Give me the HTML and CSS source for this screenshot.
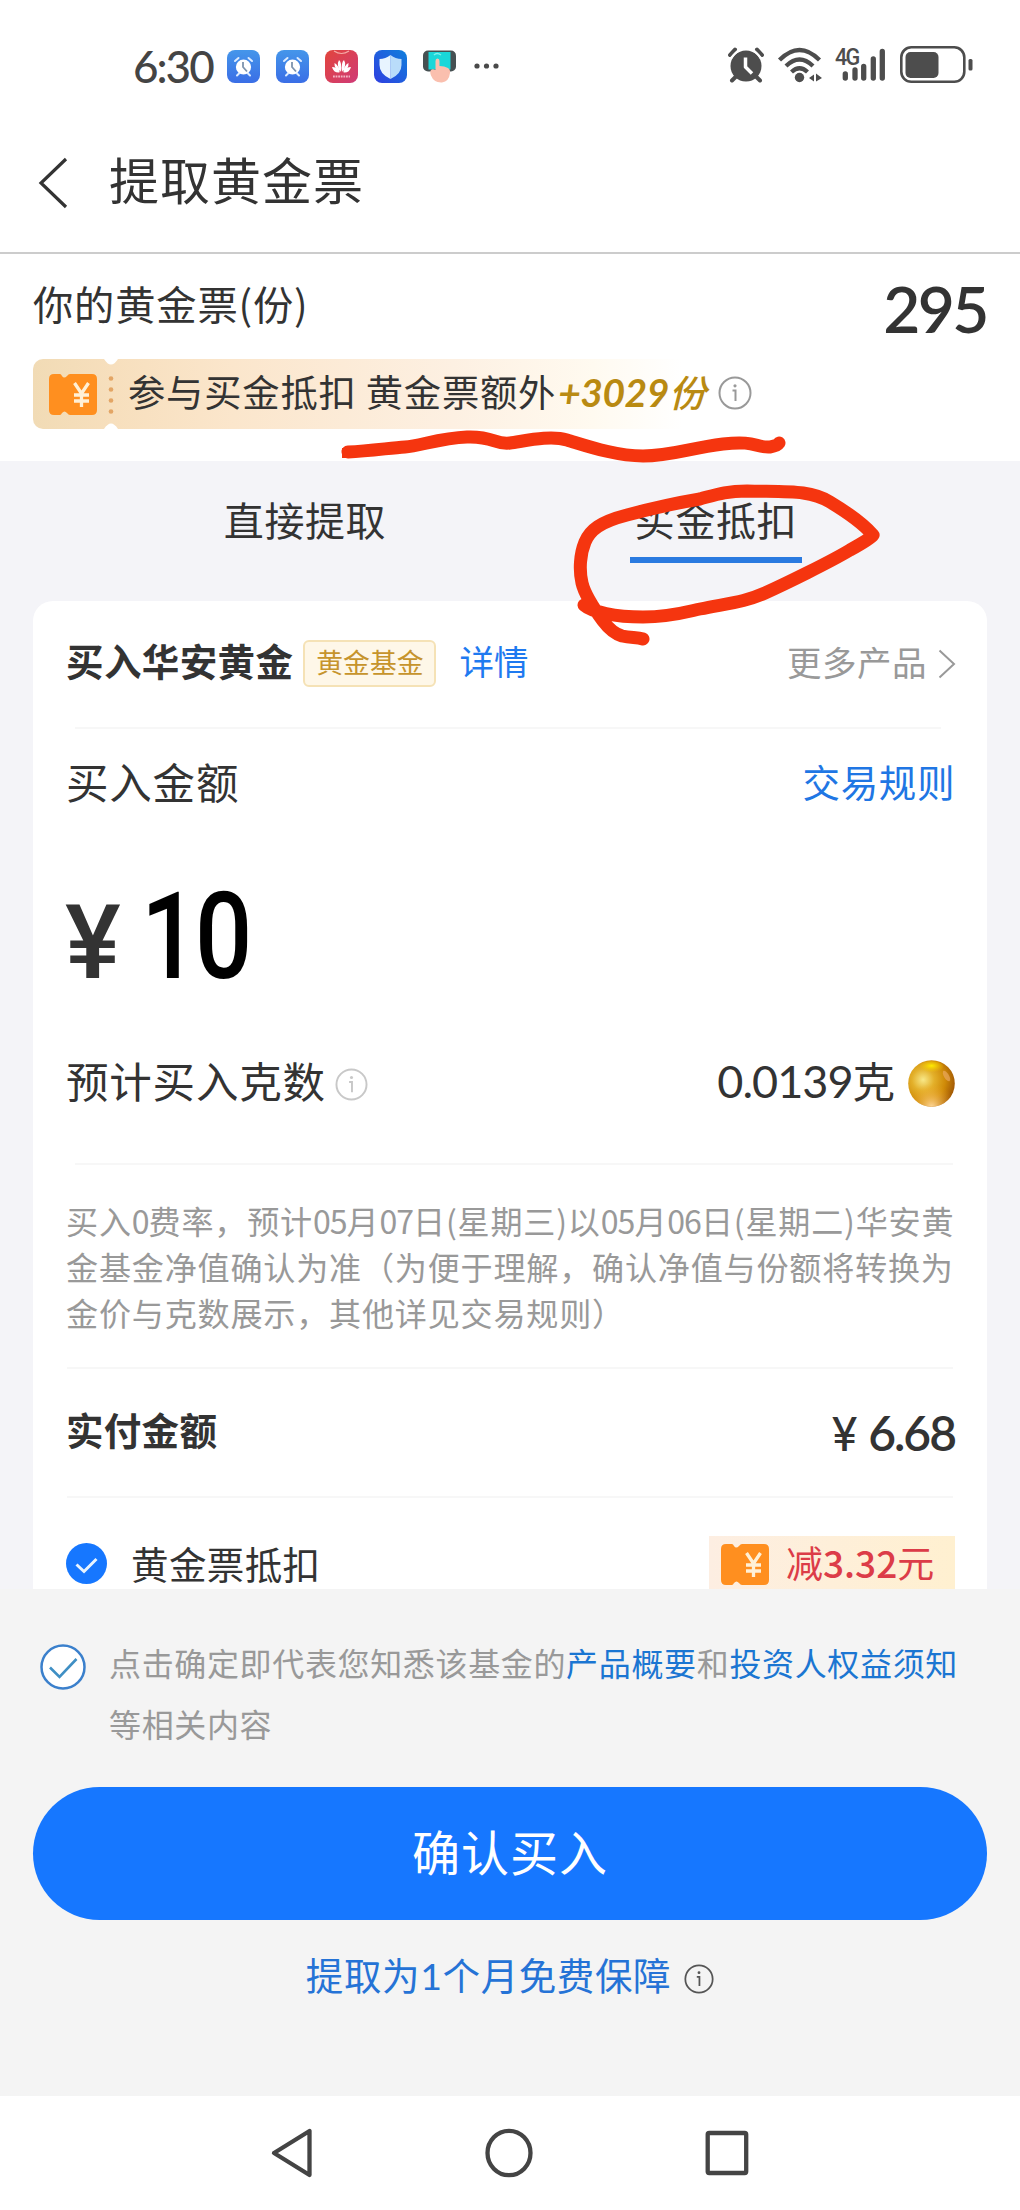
FILE: index.html
```html
<!DOCTYPE html>
<html lang="zh-CN">
<head>
<meta charset="utf-8">
<title>提取黄金票</title>
<link rel="stylesheet" href="styles.css">
</head>
<body>
<svg class="defs" width="0" height="0" aria-hidden="true">
  <defs>
    <linearGradient id="blueTile" x1="0" y1="0" x2="0" y2="1"><stop offset="0" stop-color="#4596ea"/><stop offset="1" stop-color="#3a6ee6"/></linearGradient>
    <linearGradient id="redTile" x1="0" y1="0" x2="1" y2="1"><stop offset="0" stop-color="#e2453c"/><stop offset="1" stop-color="#cf3a78"/></linearGradient>
    <linearGradient id="shieldTile" x1="1" y1="0" x2="0" y2="1"><stop offset="0" stop-color="#0f7fdc"/><stop offset="1" stop-color="#2f3fe0"/></linearGradient>
    <radialGradient id="gold" cx=".32" cy=".42" r=".68"><stop offset="0" stop-color="#f8e888"/><stop offset=".35" stop-color="#e3b02a"/><stop offset=".7" stop-color="#cf8a08"/><stop offset="1" stop-color="#a55c05"/></radialGradient>
    <radialGradient id="goldGlow" cx=".5" cy="1" r=".5"><stop offset="0" stop-color="#ffd89a"/><stop offset="1" stop-color="#f0a820" stop-opacity="0"/></radialGradient>
    <radialGradient id="goldTop" cx=".5" cy=".4" r=".55"><stop offset="0" stop-color="#ffec00"/><stop offset="1" stop-color="#f5c800" stop-opacity="0"/></radialGradient>
    <symbol id="alarmTile" viewBox="0 0 33 33">
      <rect width="33" height="33" rx="8" fill="url(#blueTile)"/>
      <circle cx="16.500" cy="17" r="7.600" fill="#fff"/>
      <path d="M8 11l3.500-3M25 11l-3.500-3M10 25.500l2-2M23 25.500l-2-2" stroke="#dcebff" stroke-width="2" stroke-linecap="round"/>
      <path d="M16 12v5l4 4.500" fill="none" stroke="#7d93ad" stroke-width="1.800"/>
    </symbol>
    <symbol id="ticket" viewBox="0 0 48 41">
      <path d="M5 0h6q1 0 2 2 2 3 5 0 1.500-2 3-2h22q5 0 5 5v31q0 5-5 5H21q-1.500 0-3-2-2.500-3-5 0-1 2-2 2H5q-5 0-5-5V5q0-5 5-5z" fill="#ff8f1f"/>
      <path d="M25.500 9l7 10.500L39.500 9M32.500 19.500V33M25 21h15M25 27h15" fill="none" stroke="#fff0d6" stroke-width="3.300"/>
    </symbol>
    <symbol id="info" viewBox="0 0 34 34">
      <circle cx="17" cy="17" r="15.500" fill="none" stroke="currentColor" stroke-width="2"/>
      <circle cx="17" cy="9.800" r="1.600" fill="currentColor"/>
      <path d="M14.500 14.500H17.500V25" fill="none" stroke="currentColor" stroke-width="2"/>
    </symbol>
  </defs>
</svg>

<div class="screen">
  <div class="statusbar">
    <span class="clock">6:30</span>
    <div class="notices">
      <svg width="33" height="33"><use href="#alarmTile"/></svg>
      <svg width="33" height="33"><use href="#alarmTile"/></svg>
      <svg width="33" height="33" viewBox="0 0 33 33">
        <rect width="33" height="33" rx="8" fill="url(#redTile)"/>
        <path d="M9 1q7.500 5 15 0" fill="none" stroke="#f5a9a5" stroke-width="1.200"/>
        <g fill="#fff"><path d="M16 22q-5-7-2-12 3 2 2 12zM17 22q5-7 2-12-3 2-2 12zM15 22q-6-3-5.500-9 4 2 5.500 9zM18 22q6-3 5.500-9-4 2-5.500 9zM14.500 22.500q-6 .5-7.500-5.500 5 0 7.500 5.500zM18.500 22.500q6 .5 7.500-5.500-5 0-7.500 5.500z"/></g>
        <path d="M8 26.500h17" stroke="#f3b3c2" stroke-width="1.800" stroke-dasharray="1.800 .8"/>
      </svg>
      <svg width="33" height="33" viewBox="0 0 33 33">
        <rect width="33" height="33" rx="8" fill="url(#shieldTile)"/>
        <path d="M16.500 5q5 4 11 4v6q0 9-11 14z" fill="#b9dcfa"/>
        <path d="M16.500 5q-5 4-11 4v6q0 9 11 14z" fill="#e8f4ff"/>
      </svg>
      <svg width="33" height="33" viewBox="0 0 33 33">
        <rect y=".5" width="33" height="21" rx="5" fill="#465052"/>
        <rect x="5.500" y="2" width="22" height="17.500" fill="#19d7d9"/>
        <path d="M11 5q3-3 7 0" fill="none" stroke="#7df0ee" stroke-width="1.500"/>
        <path d="M12.500 11q0-2.500 2-2.500t2 2.500v5q5 0 8.500 2 2.500 1.500 2 5-1 8.500-8 9.500-8 .5-11-7-1.500-4 0-5.500t4.500 0z" fill="#fabfae"/>
      </svg>
      <svg width="26" height="8" viewBox="0 0 26 8" fill="#4a4a4a"><circle cx="4" cy="4" r="2.600"/><circle cx="13.500" cy="4" r="2.600"/><circle cx="23" cy="4" r="2.600"/></svg>
    </div>
    <div class="signals">
      <svg width="36" height="36" viewBox="0 0 36 36">
        <circle cx="18" cy="19" r="15.500" fill="#4d4d4d"/>
        <path d="M2 8l5-5.500M34 8l-5-5.500M4 33.500l4-4M32 33.500l-4-4" stroke="#4d4d4d" stroke-width="4" stroke-linecap="round"/>
        <path d="M3 11.500Q7 5 13 2.500M33 11.500Q29 5 23 2.500" fill="none" stroke="#fff" stroke-width="2"/>
        <path d="M17.500 10.500V20l6.500 6.500" fill="none" stroke="#fff" stroke-width="3.500" stroke-linejoin="round"/>
      </svg>
      <svg class="wifi" width="46" height="36" viewBox="0 0 46 36">
        <path d="M2.500 13Q22.500-7 42.500 13M9 19Q22.500 6 36 19M14.500 25Q22.500 17.500 30.500 25" fill="none" stroke="#4d4d4d" stroke-width="4.300"/>
        <circle cx="22.500" cy="30.500" r="4.700" fill="#4d4d4d"/>
        <path d="M32 31l5-3.500v7zM45 31l-6-4.500v8z" fill="#4d4d4d"/>
      </svg>
      <div class="mobile">
        <span class="net">4G</span>
        <svg width="50" height="36" viewBox="0 0 50 36"><path d="M10.300 27v4M20 23v8M28.700 19.500V31M38.300 12v19M47.300 4.500V31" stroke="#4d4d4d" stroke-width="5.300" stroke-linecap="round"/></svg>
      </div>
      <svg class="battery" width="74" height="38" viewBox="0 0 74 38">
        <rect x="1.300" y="1.300" width="63" height="34.500" rx="10" fill="none" stroke="#4d4d4d" stroke-width="2.600"/>
        <rect x="5.500" y="6" width="33" height="26" rx="5" fill="#4d4d4d"/>
        <rect x="68.500" y="13" width="4" height="11.500" rx="1.500" fill="#4d4d4d"/>
      </svg>
    </div>
  </div>

  <header class="header">
    <svg class="back" width="30" height="52" viewBox="0 0 30 52"><path d="M28 2L3 26l25 24" fill="none" stroke="#333" stroke-width="3.200"/></svg>
    <h1 class="title">提取黄金票</h1>
  </header>

  <section class="balance">
    <div class="balance-row">
      <span class="balance-label">你的黄金票(份)</span>
      <span class="balance-value">295</span>
    </div>
    <div class="promo">
      <div class="promo-stub"><svg width="48" height="41"><use href="#ticket"/></svg></div>
      <div class="promo-perf"><svg width="14" height="70" viewBox="0 0 14 70"><path d="M0 0q7 11 14 0zM0 70q7-11 14 0z" fill="#fff"/><g fill="#e3a565"><circle cx="7" cy="19.500" r="2.300"/><circle cx="7" cy="30.500" r="2.300"/><circle cx="7" cy="41.500" r="2.300"/><circle cx="7" cy="52.500" r="2.300"/></g></svg></div>
      <span class="promo-text">参与买金抵扣 黄金票额外</span>
      <span class="promo-bonus"><span class="lat">+3029</span>份</span>
      <svg class="promo-info" width="34" height="34"><use href="#info"/></svg>
    </div>
  </section>

  <nav class="tabs">
    <div class="tab">直接提取</div>
    <div class="tab tab-active">买金抵扣</div>
  </nav>

  <div class="content">
  <main class="card">
    <div class="row product">
      <span class="product-name">买入华安黄金</span>
      <span class="product-tag">黄金基金</span>
      <a class="product-detail">详情</a>
      <span class="product-more">更多产品</span>
      <svg width="18" height="30" viewBox="0 0 18 30"><path d="M1.500 1.500L16 15 1.500 28.500" fill="none" stroke="#999" stroke-width="2"/></svg>
    </div>
    <div class="rule rule-inset"></div>
    <div class="row amount-head">
      <span class="label">买入金额</span>
      <a class="rules-link">交易规则</a>
    </div>
    <div class="amount"><span class="yen">¥</span><span class="amount-value">10</span></div>
    <div class="row grams">
      <span class="label">预计买入克数</span>
      <svg class="grams-info" width="33" height="33"><use href="#info"/></svg>
      <span class="grams-value"><span class="lat">0.0139</span>克</span>
      <svg width="47" height="47" viewBox="0 0 47 47">
        <circle cx="23.500" cy="23.500" r="23.300" fill="url(#gold)"/>
        <circle cx="23.500" cy="23.500" r="23.300" fill="url(#goldGlow)"/>
        <ellipse cx="23.500" cy="7" rx="12" ry="6" fill="url(#goldTop)"/>
        <ellipse cx="38.500" cy="16" rx="2.500" ry="6" transform="rotate(-30 38.500 16)" fill="#e9a860" opacity=".7"/>
      </svg>
    </div>
    <div class="rule rule-half"></div>
    <p class="note">买入<i>0</i>费率，预计<i>05</i>月<i>07</i>日(星期三)以<i>05</i>月<i>06</i>日(星期二)华安黄<br>金基金净值确认为准（为便于理解，确认净值与份额将转换为<br>金价与克数展示，其他详见交易规则）</p>
    <div class="rule"></div>
    <div class="row pay">
      <span class="pay-label">实付金额</span>
      <span class="pay-value"><span class="pay-yen">¥</span>6.68</span>
    </div>
    <div class="rule"></div>
    <div class="deduct">
      <svg width="41" height="41" viewBox="0 0 41 41"><circle cx="20.500" cy="20.500" r="20.500" fill="#1677ff"/><path d="M10.500 21.500l7.500 7L30.500 16" fill="none" stroke="#e8f4ff" stroke-width="3"/></svg>
      <span class="deduct-label">黄金票抵扣</span>
      <div class="coupon">
        <svg width="48" height="41"><use href="#ticket"/></svg>
        <span>减<i>3.32</i>元</span>
      </div>
    </div>
  </main>
  </div>

  <footer class="footer">
    <div class="agree">
      <svg class="agree-check" width="46" height="46" viewBox="0 0 46 46"><circle cx="23" cy="23" r="21.500" fill="#fff" stroke="#3b80cc" stroke-width="2.500"/><path d="M10 23.500l9.500 9.500L36.500 15" fill="none" stroke="#3f8fc4" stroke-width="2.600"/></svg>
      <p class="agree-text">点击确定即代表您知悉该基金的<a>产品概要</a>和<a>投资人权益须知</a><br>等相关内容</p>
    </div>
    <button class="confirm">确认买入</button>
    <div class="guarantee">
      <span>提取为<span class="lat">1</span>个月免费保障</span>
      <svg class="guarantee-info" width="30" height="30"><use href="#info"/></svg>
    </div>
  </footer>

  <div class="navbar">
    <svg width="42" height="50" viewBox="0 0 42 50"><path d="M38.500 3v44L3 25z" fill="none" stroke="#444" stroke-width="4.300" stroke-linejoin="round"/></svg>
    <svg width="48" height="50" viewBox="0 0 48 50"><ellipse cx="24" cy="25" rx="21.500" ry="22.200" fill="none" stroke="#444" stroke-width="4.300"/></svg>
    <svg width="44" height="46" viewBox="0 0 44 46"><rect x="2.700" y="3" width="38.500" height="40" rx="1.500" fill="none" stroke="#444" stroke-width="4.300"/></svg>
  </div>

  <svg class="marker" width="1020" height="700" viewBox="0 0 1020 700">
    <g fill="none" stroke="#f5350f" stroke-width="13" stroke-linecap="round" stroke-linejoin="round">
      <path d="M348 452C370 451 390 448 405 447S440 438 467 437S495 445 510 443S550 435 567 440S615 456 643 456S690 448 723 444S755 448 770 447Q777 446 779 443"/>
      <path d="M584 605C592 612 615 617 643 617S690 611 700 609C730 603 745 602 765 593S830 562 850 550Q870 539 873 535Q860 520 830 502C810 490 790 492 747 491C725 491 715 495 700 499C670 504 650 509 627 515C600 522 590 530 585 542S579 570 582 583S595 610 603 621Q612 633 622 636C632 638 637 637 643 639"/>
    </g>
    <path d="M342 448h8v10h-8z" fill="#f5350f"/>
  </svg>
</div>
</body>
</html>
```
FILE: styles.css
```css
* { box-sizing: border-box; }

body {
  margin: 0;
  background: #fff;
  color: #333;
  font-family: "Noto Sans CJK SC", sans-serif;
  line-height: 1;
}

svg { display: block; flex: none; }
i { font-style: normal; }
.defs { position: absolute; }
.lat { font-family: Lato, "Noto Sans CJK SC", sans-serif; }

.screen {
  position: relative;
  width: 1020px;
  height: 2210px;
  overflow: hidden;
  white-space: nowrap;
}

/* status bar */
.statusbar {
  display: flex;
  align-items: center;
  height: 108px;
  padding: 24px 46px 0 133px;
}
.clock {
  width: 94px;
  font: 500 44px/1 Lato, sans-serif;
  letter-spacing: -2px;
  color: #444;
}
.notices { display: flex; align-items: center; gap: 16px; }
.notices svg:last-child { margin-left: 1px; }
.signals { display: flex; align-items: center; margin-left: auto; margin-top: -2px; }
.wifi { margin-left: 13px; }
.mobile { display: flex; margin-left: 12px; width: 50px; position: relative; }
.net {
  position: absolute;
  left: 0;
  top: -2px;
  font: 500 24px/1 Roboto, sans-serif;
  letter-spacing: -2px;
  transform: scaleX(.9);
  transform-origin: left;
  color: #4d4d4d;
}
.battery { margin-left: 15px; }

/* page header */
.header {
  display: flex;
  align-items: center;
  height: 146px;
  padding: 0 38px 4px;
  border-bottom: 2px solid #ccc;
}
.back { margin-top: 10px; }
.title {
  margin: 0 0 0 41px;
  font-size: 50px;
  font-weight: 400;
  letter-spacing: 1px;
}

/* balance */
.balance { height: 207px; padding: 0 33px; }
.balance-row { display: flex; align-items: center; justify-content: space-between; height: 98px; }
.balance-label { font-size: 40.300px; letter-spacing: .8px; }
.balance-value {
  margin-top: 12px;
  font: 600 64px/1 Lato, sans-serif;
  letter-spacing: -2.500px;
}
.promo {
  display: flex;
  align-items: center;
  width: 720px;
  height: 70px;
  margin-top: 7px;
  border-radius: 10px;
  background: linear-gradient(90deg, #f1dbb5 0, #f7dfbd 80px, #fbe6cc 200px, #fdf0e2 420px, #fffaf0 560px, #fff 650px);
}
.promo-stub { width: 71px; padding-left: 16px; }
.promo-perf { width: 14px; }
.promo-text { margin: -4px 0 0 10px; font-size: 37.300px; letter-spacing: .8px; }
.promo-bonus {
  margin: -4px 0 0 2px;
  font-size: 37.300px;
  font-weight: 500;
  font-style: italic;
  color: #b98a12;
}
.promo-bonus .lat { font-size: 39px; font-weight: 700; letter-spacing: -.5px; }
.promo-info { margin: -2px 0 0 12px; color: #999; }

/* tabs */
.tabs {
  display: flex;
  gap: 239px;
  height: 140px;
  padding: 38px 0 0 219px;
  background: #f4f4f8;
}
.tab {
  width: 172px;
  height: 64px;
  font-size: 40px;
  letter-spacing: .6px;
  text-align: center;
}
.tab-active { border-bottom: 6px solid #2a7ae0; }

/* card */
.content { height: 988px; padding: 0 33px; background: #f4f4f8; }
.card {
  height: 988px;
  padding: 0 34px 0 33px;
  border-radius: 20px 20px 0 0;
  background: #fff;
}
.row { display: flex; align-items: center; }
.rule { height: 2px; margin-left: 1px; background: #f7f7f7; }
.rule-inset { margin: 0 12px 0 9px; }
.rule-half { margin: 33px 0 0 9px; }
.label { font-size: 42.500px; letter-spacing: .8px; }

.product { height: 126px; padding-bottom: 8px; }
.product-name { font-size: 37.500px; font-weight: 700; letter-spacing: .4px; }
.product-tag {
  width: 133px;
  height: 47px;
  margin: 6px 0 0 10px;
  border: 2px solid #f5e2b6;
  border-radius: 6px;
  background: #fef7e8;
  color: #c6942c;
  font-size: 26.800px;
  line-height: 39px;
  text-align: center;
}
.product-detail { margin-left: 23px; font-size: 34.500px; color: #1f7af0; }
.product-more { margin: 2px 11px 0 auto; font-size: 34.500px; letter-spacing: .5px; color: #999; }
.product svg { margin: 8px -3px 0 0; }

.amount-head { height: 104px; justify-content: space-between; }
.rules-link { margin-right: -2px; font-size: 37.500px; letter-spacing: .6px; color: #2076e4; }

.amount { display: flex; align-items: baseline; height: 198px; padding-top: 44px; font-family: Roboto, sans-serif; }
.yen { width: 76px; font-size: 103px; font-weight: 500; transform: scaleX(1.02); transform-origin: left; margin-left: -1px; }
.amount-value { font-size: 120px; font-weight: 500; line-height: 1; color: #000; letter-spacing: -4px; transform: scaleX(.84); transform-origin: left; }

.grams { height: 99px; }
.grams-info { margin: 8px 0 0 9px; color: #c8c8c8; }
.grams-value { margin: 2px 13px 0 auto; font-size: 42.500px; }
.grams-value .lat { font-size: 45px; letter-spacing: -1px; }
.grams svg:last-child { margin: 6px -2px 0 0; }

.note {
  margin: 32px 0;
  font-size: 32.100px;
  line-height: 46px;
  letter-spacing: .8px;
  color: #999;
}
.note i { letter-spacing: -1px; }

.pay { height: 127px; padding-bottom: 7px; justify-content: space-between; }
.pay-label { font-size: 37.500px; font-weight: 700; letter-spacing: .3px; }
.pay-value { margin: 9px -2px 0 0; font: 600 48px/1 Lato, sans-serif; letter-spacing: -2px; }
.pay-yen { margin-right: 13px; font-family: Roboto, sans-serif; font-weight: 400; }

.deduct { display: flex; align-items: center; height: 91px; padding-top: 38px; }
.deduct svg { margin-top: 2px; }
.deduct-label { margin-left: 24px; font-size: 37.500px; letter-spacing: .4px; }
.coupon {
  display: flex;
  align-items: center;
  width: 246px;
  height: 53px;
  margin: 0 -2px 0 auto;
  padding: 0 0 0 12px;
  background: linear-gradient(90deg, #fdeee2, #fff0d0);
  font-size: 37px;
  color: #dc3c48;
}
.coupon svg { margin-top: 4px; }
.coupon span { margin-left: 17px; }
.coupon i { font-weight: 500; letter-spacing: 0; }

/* footer */
.footer { height: 507px; padding: 43px 33px 0; background: #f4f4f4; }
.agree { display: flex; align-items: flex-start; padding-left: 7px; }
.agree-check { margin-top: 12px; }
.agree-text {
  margin: 0 0 0 23px;
  font-size: 32px;
  line-height: 60.500px;
  letter-spacing: .65px;
  color: #999;
}
.agree-text a { color: #1b76d2; }
.confirm {
  display: block;
  width: 954px;
  height: 133px;
  margin-top: 34px;
  padding: 0 0 7px;
  border: 0;
  border-radius: 67px;
  background: #1677ff;
  color: #fff;
  font: 400 48px/1 "Noto Sans CJK SC", sans-serif;
  letter-spacing: 1px;
}
.guarantee {
  display: flex;
  align-items: center;
  justify-content: center;
  height: 109px;
  font-size: 37.500px;
  letter-spacing: .6px;
  color: #2573d6;
}
.guarantee-info { margin: 8px 0 0 13px; color: #555; }

/* system navigation */
.navbar {
  display: flex;
  align-items: center;
  justify-content: space-between;
  height: 114px;
  padding: 0 271px;
}

/* hand-drawn highlights over the page */
.marker { position: absolute; left: 0; top: 0; }
```
